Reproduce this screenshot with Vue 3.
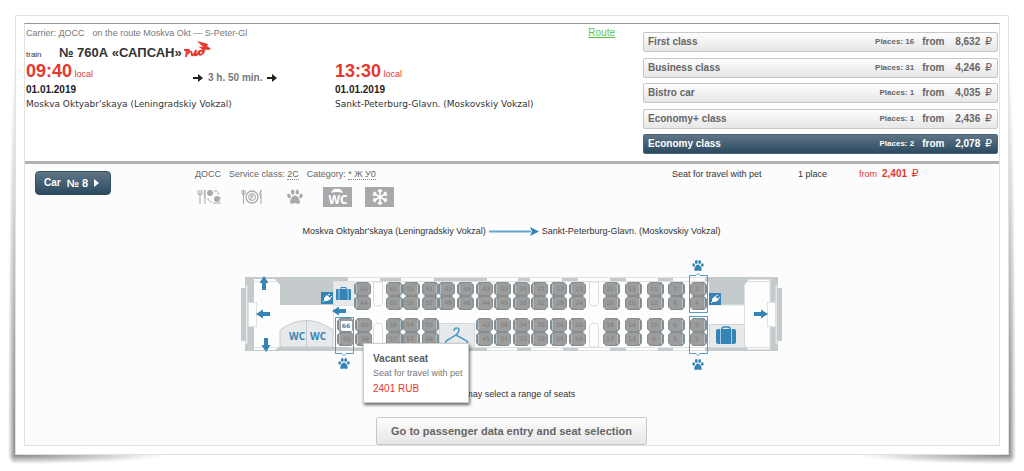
<script setup>
const classes = [
  { name: 'First class', places: 16, price: '8,632' },
  { name: 'Business class', places: 31, price: '4,246' },
  { name: 'Bistro car', places: 1, price: '4,035' },
  { name: 'Economy+ class', places: 1, price: '2,436' },
  { name: 'Economy class', places: 2, price: '2,078', active: true },
]

// [x, upper seat, lower seat, side of the backrest]
const topRow = [
  [354, 63, 64, 'l'], [386, 61, 62, 'r'], [403, 55, 56, 'r'], [422, 51, 52, 'r'],
  [438, 47, 48, 'l'], [457, 45, 46, 'l'], [476, 43, 44, 'l'], [494, 39, 40, 'l'],
  [513, 35, 36, 'l'], [531, 31, 32, 'l'], [550, 27, 28, 'l'], [569, 23, 24, 'l'],
  [603, 21, 22, 'r'], [625, 15, 16, 'r'], [647, 11, 12, 'r'], [668, 7, 8, 'r'], [690, 3, 4, 'r'],
]
const bottomRow = [
  [337, 66, 65, 'l'], [355, 60, 59, 'l'], [386, 58, 57, 'r'], [403, 54, 53, 'r'], [422, 50, 49, 'r'],
  [476, 42, 41, 'l'], [494, 38, 37, 'l'], [513, 34, 33, 'l'], [531, 30, 29, 'l'],
  [550, 26, 25, 'l'], [569, 20, 19, 'l'],
  [603, 18, 17, 'r'], [625, 14, 13, 'r'], [647, 10, 9, 'r'], [668, 6, 5, 'r'], [690, 2, 1, 'r'],
]
const seats = []
for (const [row, y] of [[topRow, 282], [bottomRow, 318]]) {
  for (const [x, a, b, side] of row) {
    seats.push({ x, y, n: a, side }, { x, y: y + 14, n: b, side })
  }
}

const wallTop = [[380, 21], [434, 53], [518, 12], [562, 16], [610, 16], [658, 15], [705, 6]]
const wallBottom = [[333, 52], [464, 23], [517, 14], [563, 15], [610, 16], [658, 15], [705, 40]]
const paws = [[344, 364], [698, 266], [698, 365]]
const arrows = [
  [264, 283, -90], [266, 345, 90], [263, 314, 180], [339, 311, 180], [761, 314, 0],
]
</script>

<template>
  <main class="card">
    <div class="curl"></div>
    <div class="panel">
      <section class="summary">
        <div class="trip">
          <div class="carrier">
            <span>Carrier: ДОСС</span><span>on the route Moskva Okt — S-Peter-Gl</span>
            <a href="#route">Route</a>
          </div>
          <div class="train">
            <span class="train-label">train</span>
            <h1>№ 760А «САПСАН»</h1>
            <svg class="logo" viewBox="0 0 28 18" width="28" height="18" role="img" aria-label="РЖД">
              <g fill="none" stroke="#e6392f" stroke-width="2">
                <path d="M0 10H4Q6 10 5 12T2 14M3 10L2 17" />
                <path d="M7 11L8 15Q10 16 12 10L11 15Q13 16 15 11" />
                <path d="M19 11Q15 10 15 13T18 14Q22 11 18 8L26 9" />
              </g>
              <path d="M13 1L24 4L23 6L27 9L20 8Z" fill="#e6392f" />
            </svg>
          </div>
          <div class="legs">
            <div class="leg">
              <div class="time"><strong>09:40</strong> local</div>
              <div class="date">01.01.2019</div>
              <div class="station">Moskva Oktyabr'skaya (Leningradskiy Vokzal)</div>
            </div>
            <div class="duration">
              <svg viewBox="0 0 10 8" width="10" height="8"><path d="M0 3H5V0L10 4L5 8V5H0Z" fill="#222" /></svg>
              <span>3 h. 50 min.</span>
              <svg viewBox="0 0 10 8" width="10" height="8"><path d="M0 3H5V0L10 4L5 8V5H0Z" fill="#222" /></svg>
            </div>
            <div class="leg">
              <div class="time"><strong>13:30</strong> local</div>
              <div class="date">01.01.2019</div>
              <div class="station">Sankt-Peterburg-Glavn. (Moskovskiy Vokzal)</div>
            </div>
          </div>
        </div>
        <div class="classes">
          <button v-for="c in classes" :key="c.name" type="button" class="class" :class="{ active: c.active }">
            <span class="name">{{ c.name }}</span>
            <span class="places">Places: {{ c.places }}</span>
            <span class="from">from</span>
            <span class="price">{{ c.price }} <span class="ruble">₽</span></span>
          </button>
        </div>
      </section>

      <section class="car">
        <div class="car-head">
          <button type="button" class="car-button">
            <span class="car-word">Car</span><span>№ 8</span>
            <svg viewBox="0 0 5 8" width="5" height="8"><path d="M0 0L5 4L0 8Z" fill="#fff" /></svg>
          </button>
          <div class="service">
            <div class="service-text">
              <span>ДОСС</span>
              <span>Service class: <u>2С</u></span>
              <span>Category: <u>* Ж У0</u></span>
            </div>
            <div class="icons">
              <svg viewBox="0 0 24 16" width="24" height="16" fill="none" stroke="#aaa">
                <path d="M1 1V5Q3 7 5 5V1M3 1V15M8 15V1Q6 4 8 9" />
                <circle cx="13" cy="4" r="3" fill="#aaa" stroke="none" />
                <path d="M17 2Q22 1 21 6M11 9Q11 13 15 13" stroke-dasharray="3 1" />
                <circle cx="20" cy="10" r="3" fill="#aaa" stroke="none" />
                <path d="M16 14H24M23 9H24" />
              </svg>
              <svg viewBox="0 0 22 16" width="22" height="16" fill="none" stroke="#aaa">
                <path d="M1 1V5Q3 7 4 5V1M2.500 1V15M20 15V1Q17 5 20 9" />
                <circle cx="11" cy="8" r="6" stroke-width="1.300" />
                <circle cx="11" cy="8" r="3.500" />
                <path d="M10 11V6H12V8H10" />
              </svg>
              <svg viewBox="-8 -8 16 16" width="16" height="16" fill="#aaa">
                <ellipse cx="-6" cy="-1" rx="1.700" ry="2.300" transform="rotate(-20 -6 -1)" /><ellipse cx="-2.300" cy="-5" rx="1.800" ry="2.500" />
                <ellipse cx="2.300" cy="-5" rx="1.800" ry="2.500" /><ellipse cx="6" cy="-1" rx="1.700" ry="2.300" transform="rotate(20 6 -1)" />
                <path d="M0 -1.500C3 -1.500 5 3 5 5C5 7.500 2 7 0 6C-2 7 -5 7.500 -5 5C-5 3 -3 -1.500 0 -1.500Z" />
              </svg>
              <svg viewBox="0 0 29 20" width="29" height="20">
                <rect width="29" height="20" fill="#a9a9a9" />
                <path d="M8 6Q10 1 14 2Q18 1 20 6Q14 4 8 6Z" fill="#fff" />
                <text x="15" y="17" text-anchor="middle" class="wc-icon">WC</text>
              </svg>
              <svg viewBox="0 0 29 20" width="29" height="20">
                <rect width="29" height="20" fill="#a9a9a9" />
                <g stroke="#fff" stroke-width="1.500" fill="none">
                  <path v-for="a in 6" :key="a" :transform="`rotate(${a * 60} 15 10)`" d="M15 10V2M13 3L15 5.500L17 3" />
                </g>
              </svg>
            </div>
          </div>
          <div class="offer">
            <span class="offer-name">Seat for travel with pet</span>
            <span class="offer-count">1 place</span>
            <span class="offer-price">from&nbsp; <b>2,401</b> <span class="ruble">₽</span></span>
          </div>
        </div>

        <div class="direction">
          <span>Moskva Oktyabr'skaya (Leningradskiy Vokzal)</span>
          <svg viewBox="0 0 50 9" width="50" height="9"><path d="M0 4.500H42" stroke="#61a8ce" stroke-width="2" /><path d="M41 0L50 4.500L41 9L43 4.500Z" fill="#3485b5" /></svg>
          <span>Sankt-Peterburg-Glavn. (Moskovskiy Vokzal)</span>
        </div>

        <div class="map">
          <svg viewBox="241 256 541 116" width="541" height="116">
            <defs>
              <path id="arrow" d="M-7 -2H0V-4.500L7 0L0 4.500V2H-7Z" fill="#3584b6" />
              <g id="paw" fill="#3584b6">
                <ellipse cx="-4.300" cy="-1" rx="1.400" ry="1.800" /><ellipse cx="-1.700" cy="-4" rx="1.400" ry="1.900" />
                <ellipse cx="1.700" cy="-4" rx="1.400" ry="1.900" /><ellipse cx="4.300" cy="-1" rx="1.400" ry="1.800" />
                <path d="M0 -1.500C2 -1.500 3.700 2 3.700 3.500C3.700 5.500 1.500 5 0 4.500C-1.500 5 -3.700 5.500 -3.700 3.500C-3.700 2 -2 -1.500 0 -1.500Z" />
              </g>
              <g id="plug">
                <rect width="12" height="12" fill="#3584b6" />
                <path d="M2 10L4 8M7 3L9 2M9 6L11 4" stroke="#fff" />
                <path d="M3 6L6 3L10 7L6 9L3 9Z" fill="#fff" />
              </g>
            </defs>
            <!-- body -->
            <rect x="245" y="277" width="533" height="74" fill="#fdfdfd" />
            <path d="M254 277.500H770M254 281.500H770M254 347.500H770M254 350.500H770" stroke="#dde1e2" />
            <rect v-for="[x, w] in wallTop" :key="'t' + x" :x="x" y="278" :width="w" height="3" fill="#c5cbcd" />
            <rect v-for="[x, w] in wallBottom" :key="'b' + x" :x="x" y="348" :width="w" height="3" fill="#c5cbcd" />
            <path d="M245 277H348V281H333V305H280V285L275 279H254V350H275L279 347H348V351H245Z" fill="#c5cbcd" />
            <path d="M778 277H706V281H709V305H745V285L749 279H770V350H749L745 347H709V351H778Z" fill="#c5cbcd" />
            <path d="M744.500 305V285L749 279.500H770V349.500H749L744.500 345V305H709" fill="none" stroke="#dde1e2" />
            <path d="M246.500 285V344M776.500 285V344" stroke="#e4e7e8" stroke-width="2" />
            <rect x="241" y="288" width="5" height="53" fill="#c5cbcd" />
            <rect x="777" y="288" width="5" height="53" fill="#c5cbcd" />
            <rect x="248.500" y="302.500" width="8" height="24" fill="#fdfdfd" stroke="#dde1e2" />
            <rect x="767.500" y="302.500" width="8" height="24" fill="#fdfdfd" stroke="#dde1e2" />
            <!-- service areas -->
            <path d="M280 347V330Q306 311 333 330V347ZM306.500 321V347" fill="#e7e9ea" stroke="#c5cbcd" />
            <text x="297" y="340" class="wc">WC</text>
            <text x="318" y="340" class="wc">WC</text>
            <rect x="333.500" y="281.500" width="21" height="24" fill="#e7e9ea" stroke="#dde1e2" />
            <path d="M333.500 305V330" stroke="#dde1e2" />
            <rect x="439.500" y="323.500" width="35" height="24" fill="#e7e9ea" stroke="#d3d8da" />
            <rect x="709.500" y="324.500" width="35" height="23" fill="#e7e9ea" stroke="#d3d8da" />
            <g fill="#fdfdfd" stroke="#d9dddf">
              <path d="M373.500 282V302Q373.500 306 378 306T382.500 302V282ZM589.500 282V302Q589.500 306 594 306T598.500 302V282Z" />
              <path d="M373.500 347V327Q373.500 323 378 323T382.500 327V347ZM589.500 347V327Q589.500 323 594 323T598.500 327V347Z" />
            </g>
            <use href="#plug" x="321" y="292" />
            <use href="#plug" x="709" y="293" />
            <g fill="#3584b6">
              <rect x="336" y="289" width="15" height="11" rx="1" />
              <path d="M341 290V287.500H346V290" fill="none" stroke="#3584b6" />
              <path d="M339 289V300M348 289V300" stroke="#a5cbe0" />
              <rect x="716" y="329" width="20" height="15" rx="2" />
              <path d="M722 329Q722 327 724 327H728Q730 327 730 329" fill="none" stroke="#3584b6" stroke-width="1.500" />
              <path d="M720.500 329V344M731.500 329V344" stroke="#a5cbe0" />
            </g>
            <path d="M454 331Q454 328 456.500 328Q459 328 459 330T456 335L446 341Q445 344 449 344H465Q469 344 467 341L456 335" fill="none" stroke="#4c9ac6" stroke-width="1.500" />
            <!-- seats -->
            <g v-for="s in seats" :key="s.n" :transform="`translate(${s.x} ${s.y})`">
              <path d="M3 0H14L17 3V11L14 14H3L0 11V3Z" fill="#848d92" />
              <rect :x="s.side === 'l' ? 3 : 1" y="1" width="13" height="12" rx="3" fill="#9d9d9d" />
              <path :d="s.side === 'l' ? 'M2.500 2V12' : 'M14.500 2V12'" stroke="#b3bfc6" />
              <text :x="s.side === 'l' ? 10 : 7" y="9" class="seat-number">{{ s.n }}</text>
            </g>
            <rect x="341" y="321" width="11" height="10" rx="1" fill="#fff" />
            <text x="346" y="328" class="seat-free">66</text>
            <!-- pet zones -->
            <g fill="none" stroke="#519dc6">
              <path d="M335.500 317.500H353.500V353.500H346L344 355.500L342 353.500H335.500Z" />
              <path d="M689.500 275.500H696L698 273.500L700 275.500H707.500V312.500H689.500Z" />
              <path d="M689.500 316.500H707.500V353.500H700L698 355.500L696 353.500H689.500Z" />
            </g>
            <use v-for="([x, y], i) in paws" :key="'p' + i" href="#paw" :x="x" :y="y" />
            <use v-for="([x, y, a], i) in arrows" :key="'a' + i" href="#arrow" :transform="`translate(${x} ${y}) rotate(${a})`" />
          </svg>
          <div class="tooltip" role="tooltip">
            <strong>Vacant seat</strong>
            <span>Seat for travel with pet</span>
            <em>2401 RUB</em>
          </div>
        </div>

        <p class="hint">You may select a range of seats</p>
        <button type="button" class="go">Go to passenger data entry and seat selection</button>
      </section>
    </div>
  </main>
</template>

<style>
body {
  margin: 0;
  padding: 15px;
  background: #fff;
}
</style>

<style scoped>
* {
  box-sizing: border-box;
}
.card {
  position: relative;
  isolation: isolate;
  padding: 7px 8px 8px;
  border: 1px solid #e1e1e1;
  font-family: "Liberation Sans", Arial, sans-serif;
  font-size: 9px;
  line-height: 12px;
  color: #333;
}
.curl {
  position: absolute;
  inset: 0 -8px -10px;
  z-index: -1;
  background:
    radial-gradient(ellipse 7px 400px at 100% 100%, #888, transparent) left 0 bottom 9px / 7px 400px no-repeat,
    radial-gradient(ellipse 7px 400px at 0 100%, #888, transparent) right 0 bottom 9px / 7px 400px no-repeat,
    radial-gradient(ellipse 7px 9px at 100% 0, #888, transparent) left 0 bottom 0 / 7px 9px no-repeat,
    radial-gradient(ellipse 7px 9px at 0 0, #888, transparent) right 0 bottom 0 / 7px 9px no-repeat,
    radial-gradient(ellipse 150px 9px at 0 0, #888, transparent) left 7px bottom 0 / 150px 9px no-repeat,
    radial-gradient(ellipse 150px 9px at 100% 0, #888, transparent) right 7px bottom 0 / 150px 9px no-repeat;
}
.panel {
  padding-right: 1px;
  border: 1px solid #e1e1e1;
  border-top: 1px solid #8d979f;
}
.summary {
  display: grid;
  grid-template-columns: 618fr 355fr;
  min-height: 137px;
  padding: 8px 0 7px;
}
.trip {
  padding-left: 1px;
}
.carrier {
  display: flex;
  gap: 8px;
  margin-top: -5px;
  color: #777;
}
.carrier a {
  margin: 0 28px 0 auto;
  font-size: 10px;
  color: #5fbf4a;
}
.train {
  display: flex;
  align-items: center;
  height: 24px;
  padding-top: 3px;
}
.train-label {
  width: 33px;
  padding-top: 4px;
  font-size: 8px;
}
h1 {
  margin: 0;
  font-size: 13px;
  line-height: 16px;
}
.logo {
  margin: 0 0 8px 2px;
}
.legs {
  display: grid;
  grid-template-columns: minmax(0, 167fr) minmax(0, 142fr) minmax(0, 308fr);
  margin-top: -1px;
}
.leg {
  white-space: nowrap;
}
.time {
  height: 21px;
  line-height: 18px;
  color: #e6372f;
}
.time strong {
  font-size: 18px;
}
.date {
  font-size: 10px;
  font-weight: bold;
  line-height: 14px;
  color: #222;
}
.station {
  font-family: "DejaVu Sans", Verdana, sans-serif;
  font-size: 9px;
  line-height: 14px;
}
.duration {
  display: flex;
  align-items: center;
  gap: 5px;
  height: 32px;
  white-space: nowrap;
  font-size: 10px;
  font-weight: bold;
  color: #777;
}
.classes {
  display: flex;
  flex-direction: column;
  justify-content: space-between;
}
button {
  border: 1px solid #c6c6c6;
  border-radius: 2px;
  background: linear-gradient(#fdfdfd, #e6e6e6);
  font: bold 10px/14px "Liberation Sans", Arial, sans-serif;
  color: #666;
}
.class {
  display: flex;
  align-items: center;
  height: 20px;
  padding: 0 5px 0 4px;
  text-align: left;
}
.name {
  flex: 1;
}
.places {
  padding-right: 8px;
  font-size: 8px;
}
.from {
  width: 33px;
}
.price {
  white-space: nowrap;
}
.ruble {
  margin-left: 2px;
  font: 11px/12px "DejaVu Sans", sans-serif;
}
.active {
  border-color: #4a6476;
  background: linear-gradient(#5f7586, #2a4a60);
  color: #fff;
}
.car {
  display: flex;
  flex-direction: column;
  align-items: center;
  margin-right: -1px;
  padding-right: 1px;
  border-top: 3px solid #b0b3b3;
  background: #fcfcfc;
}
.car-head {
  display: grid;
  grid-template-columns: 170fr 477fr 326fr;
  align-self: stretch;
  padding-top: 4px;
}
.car-button {
  display: flex;
  align-items: center;
  justify-self: start;
  gap: 6px;
  height: 24px;
  margin: 3px 0 0 10px;
  padding: 0 11px 0 8px;
  border-color: #34505f;
  border-radius: 4px;
  background: linear-gradient(#5f7586, #2a4a60);
  font-size: 11px;
  color: #fff;
}
.car-word {
  font-size: 10px;
}
.service-text {
  display: flex;
  gap: 8px;
  color: #666;
}
.service-text u {
  border-bottom: 1px dotted #888;
  text-decoration: none;
}
.icons {
  display: flex;
  align-items: center;
  height: 20px;
  margin: 7px 0 0 2px;
}
.icons svg:nth-child(2) {
  margin-left: 20px;
}
.icons svg:nth-child(3) {
  margin-left: 24px;
}
.icons svg:nth-child(4) {
  margin-left: 20px;
}
.icons svg:nth-child(5) {
  margin-left: 13px;
}
.wc-icon {
  font: bold 12px "Open Sans", sans-serif;
  fill: #fff;
}
.offer {
  display: flex;
}
.offer-name {
  width: 126px;
}
.offer-count {
  width: 61px;
}
.offer-price {
  color: #e6372f;
}
.offer-price b {
  font-size: 10px;
}
.direction {
  display: flex;
  align-items: center;
  gap: 3px;
  margin-top: 18px;
}
.map {
  position: relative;
  margin-top: 19px;
}
.map > svg {
  display: block;
}
.wc {
  font: bold 10px "Open Sans", sans-serif;
  fill: #3584b6;
  text-anchor: middle;
}
.seat-number {
  font: 6px "DejaVu Sans", sans-serif;
  fill: #7c7c7c;
  text-anchor: middle;
}
.seat-free {
  font: bold 6px "DejaVu Sans", sans-serif;
  fill: #3584b6;
  text-anchor: middle;
}
.tooltip {
  position: absolute;
  top: 87px;
  left: 122px;
  display: flex;
  flex-direction: column;
  width: 106px;
  padding: 7px 8px 6px 9px;
  border: 1px solid #ccc;
  background: #fff;
  box-shadow: 1px 2px 3px #0009;
  line-height: 15px;
  white-space: nowrap;
}
.tooltip strong {
  font-size: 10px;
  color: #566068;
}
.tooltip span {
  color: #777;
}
.tooltip em {
  font-size: 10px;
  font-style: normal;
  color: #e6372f;
}
.hint {
  margin: 16px 0 0;
}
.go {
  height: 28px;
  margin: 17px 0 0;
  padding: 0 14px;
  font-size: 11px;
}
</style>
